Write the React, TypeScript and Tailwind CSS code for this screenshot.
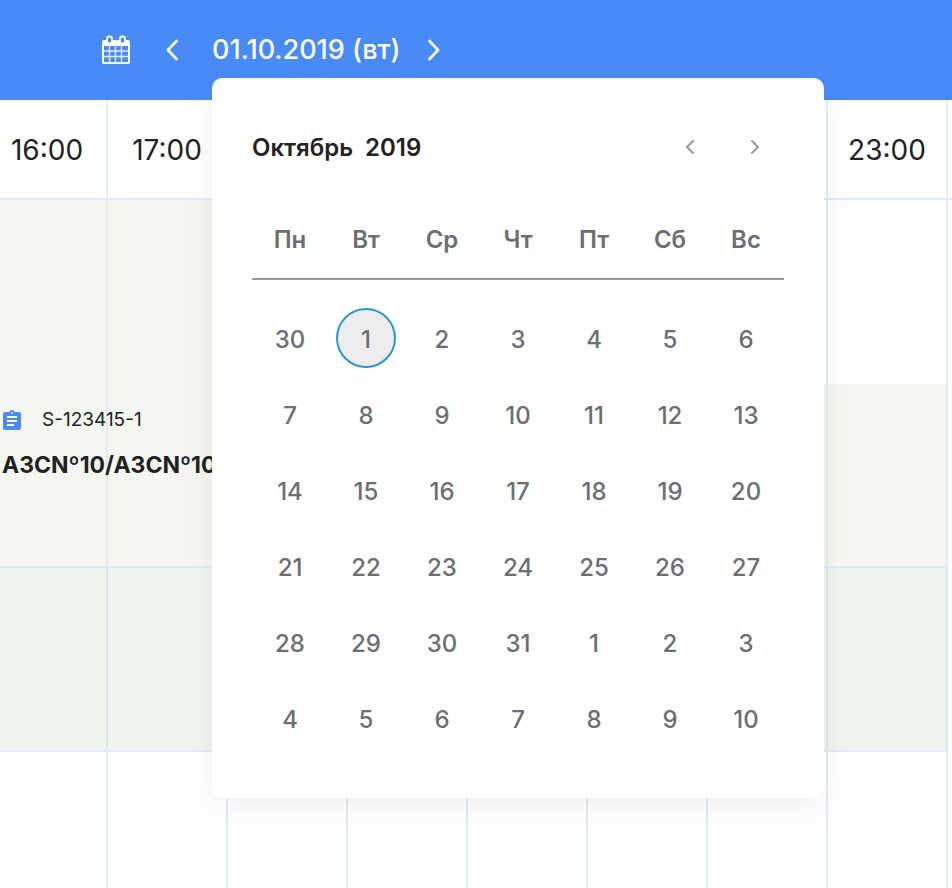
import type { ReactNode } from "react";

const HOURS = ["16:00", "17:00", "18:00", "19:00", "20:00", "21:00", "22:00", "23:00"];
const WEEKDAYS = ["Пн", "Вт", "Ср", "Чт", "Пт", "Сб", "Вс"];
const WEEKS = [
  [30, 1, 2, 3, 4, 5, 6],
  [7, 8, 9, 10, 11, 12, 13],
  [14, 15, 16, 17, 18, 19, 20],
  [21, 22, 23, 24, 25, 26, 27],
  [28, 29, 30, 31, 1, 2, 3],
  [4, 5, 6, 7, 8, 9, 10],
];

function CalendarIcon() {
  return (
    <svg width="30" height="30" viewBox="0 0 30 30" aria-hidden="true">
      <path
        fill="#fff"
        fillRule="evenodd"
        d="M3 5h24a2 2 0 0 1 2 2v20a2 2 0 0 1-2 2H3a2 2 0 0 1-2-2V7a2 2 0 0 1 2-2ZM3 11v16h24V11Z"
      />
      <path d="M3 16h24M3 21.500h24M8.500 11v16M14.500 11v16M20.500 11v16" stroke="#fff" strokeWidth="1.4" strokeOpacity="0.85" />
      <rect x="6" y="1.500" width="5" height="7" rx="2.2" fill="#488bf8" stroke="#fff" strokeWidth="1.800" />
      <rect x="19" y="1.500" width="5" height="7" rx="2.2" fill="#488bf8" stroke="#fff" strokeWidth="1.800" />
    </svg>
  );
}

function HeaderChevron({ d }: { d: string }) {
  return (
    <svg width="12" height="22" viewBox="0 0 12 22" fill="none" stroke="#fff" strokeWidth="2.600" strokeLinecap="round" strokeLinejoin="round" aria-hidden="true">
      <path d={d} />
    </svg>
  );
}

function SmallChevron({ d }: { d: string }) {
  return (
    <svg width="8" height="14" viewBox="0 0 8 14" fill="none" stroke="#999" strokeWidth="2" strokeLinecap="round" strokeLinejoin="round" aria-hidden="true">
      <path d={d} />
    </svg>
  );
}

function TaskIcon() {
  return (
    <svg width="18" height="20" viewBox="0 0 18 20" aria-hidden="true">
      <path fill="#488bf8" d="M2 2h4.200a3 3 0 0 1 5.600 0H16a2 2 0 0 1 2 2v14a2 2 0 0 1-2 2H2a2 2 0 0 1-2-2V4a2 2 0 0 1 2-2Z" />
      <circle cx="9" cy="3" r="1" fill="#fff" />
      <path d="M4 7h10M4 11h10M4 15h7" stroke="#fff" strokeWidth="2" />
    </svg>
  );
}

function DatePicker() {
  return (
    <section className="absolute left-0 top-full z-10 w-[612px] rounded-[10px] bg-white px-10 pb-[42px] text-2xl shadow-[0_10px_32px_rgba(0,0,0,0.06)]">
      <div className="flex h-[138px] items-center justify-between pr-[25px]">
        <h2 className="flex gap-3 pt-0.5 font-semibold text-[#222]">
          <span>Октябрь</span>
          <span>2019</span>
        </h2>
        <div className="flex gap-[57px]">
          <button type="button" aria-label="Предыдущий месяц">
            <SmallChevron d="M7 1 1 7l6 6" />
          </button>
          <button type="button" aria-label="Следующий месяц">
            <SmallChevron d="m1 1 6 6-6 6" />
          </button>
        </div>
      </div>
      <table className="w-full table-fixed border-separate border-spacing-0 text-[#6d6e73]">
        <thead>
          <tr>
            {WEEKDAYS.map((day) => (
              <th key={day} scope="col" className="h-16 border-b-2 border-[#999] p-0 pb-5 align-bottom font-semibold leading-9">
                {day}
              </th>
            ))}
          </tr>
        </thead>
        <tbody className="before:block before:h-5">
          {WEEKS.map((week, row) => (
            <tr key={row}>
              {week.map((day, col) => (
                <td key={col} className="h-[76px] p-0 text-center font-medium">
                  <button
                    type="button"
                    className={
                      row === 0 && col === 1
                        ? "size-[60px] rounded-full border-2 border-[#2a97c9] bg-[#ededed] pt-1 align-middle"
                        : "size-[60px] rounded-full pt-1 align-middle"
                    }
                  >
                    {day}
                  </button>
                </td>
              ))}
            </tr>
          ))}
        </tbody>
      </table>
    </section>
  );
}

function GridRow({ className, children }: { className: string; children?: ReactNode }) {
  return (
    <div className={className}>
      {HOURS.map((hour) => (
        <div key={hour} className="w-[120px] shrink-0 border-r-2 border-[#e4edfd]" />
      ))}
      {children}
    </div>
  );
}

export default function App() {
  return (
    <div className="flex min-h-screen flex-col overflow-hidden bg-white font-['Inter','Noto_Sans',sans-serif] text-[#222]">
      <header className="flex h-[100px] items-center bg-[#488bf8] pl-[101px] text-[27px] font-medium text-white">
        <button type="button" aria-label="Календарь">
          <CalendarIcon />
        </button>
        <button type="button" aria-label="Предыдущий день" className="ml-[35px]">
          <HeaderChevron d="M10.500 2 2 11l8.500 9" />
        </button>
        <div className="relative ml-[34px] flex h-14 items-center">
          <time dateTime="2019-10-01" className="whitespace-nowrap">
            01.10.2019 (вт)
          </time>
          <DatePicker />
        </div>
        <button type="button" aria-label="Следующий день" className="ml-7">
          <HeaderChevron d="m1.500 2 8.500 9-8.500 9" />
        </button>
      </header>

      <main className="flex grow flex-col">
        <div className="h-[100px] border-b-2 border-[#e0eafc]">
          <div className="-ml-3 flex h-full">
            {HOURS.map((hour) => (
              <div key={hour} className="flex w-[120px] shrink-0 items-center justify-center border-r-2 border-[#e4edfd] pt-0.5 text-[28px]">
                {hour}
              </div>
            ))}
          </div>
        </div>
        <div className="-ml-3 flex w-[972px] grow flex-col">
          <GridRow className="relative flex h-[368px] w-[960px] border-b-2 border-[#e0eafc]">
            <article className="absolute inset-y-0 left-0 w-[480px] bg-[#dae4cd]/30 pl-[14px] pt-[207px]">
              <p className="flex items-center gap-[21px] pl-px text-[19px] leading-[26px]">
                <TaskIcon />
                S-123415-1
              </p>
              <h3 className="mt-4 whitespace-nowrap text-[23px] font-bold leading-8">A3CNº10/A3CNº10</h3>
            </article>
            <div className="absolute bottom-0 right-0 h-[182px] w-[360px] bg-[#dae4cd]/30" />
          </GridRow>
          <GridRow className="relative flex h-[184px] w-[960px] border-b-2 border-[#e0eafc]">
            <div className="absolute inset-0 bg-[#cadac6]/30" />
          </GridRow>
          <GridRow className="flex w-[960px] grow" />
        </div>
      </main>
    </div>
  );
}
